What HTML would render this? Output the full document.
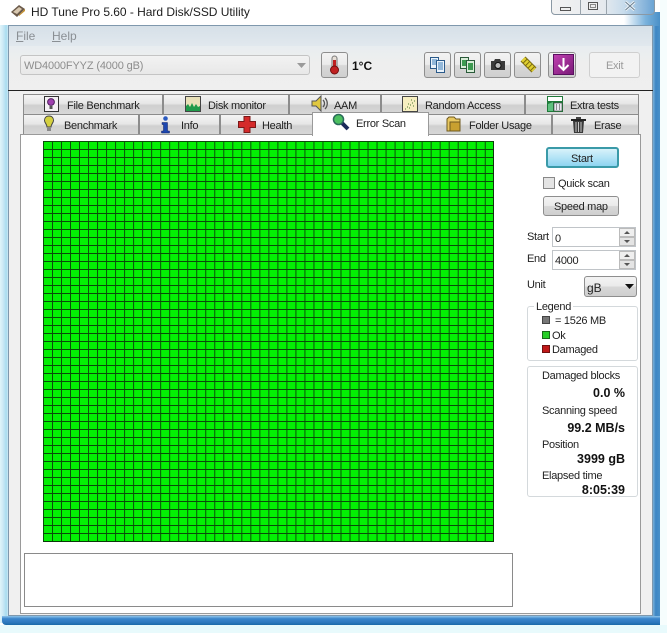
<!DOCTYPE html>
<html><head><meta charset="utf-8"><style>
html,body{margin:0;padding:0}
body{width:667px;height:633px;position:relative;overflow:hidden;background:#eefcfd;font-family:"Liberation Sans",sans-serif;font-size:11px;color:#222}
.a{position:absolute;box-sizing:border-box}
.t{position:absolute;white-space:nowrap;line-height:14px;margin-top:1px;letter-spacing:-.28px}
.v{font-weight:bold;font-size:12.5px;color:#111;letter-spacing:0}
.tab{position:absolute;box-sizing:border-box;background:linear-gradient(#f4f4f4,#e6e6e6 45%,#cfcfcf 55%,#d8d8d8);border:1px solid #8c8c8c;border-bottom:none}
.btn{position:absolute;box-sizing:border-box;border:1px solid #8e8e8e;border-radius:3px;background:linear-gradient(#f3f3f3,#ebebeb 48%,#d8d8d8 52%,#cfcfcf)}
.box{position:absolute;box-sizing:border-box;border:1px solid #d4d9dc;border-radius:3px}
svg{position:absolute;overflow:visible}
</style></head><body>
<!-- outer frame -->
<div class="a" style="left:0;top:0;width:667px;height:633px;background:#fff"></div>
<div class="a" style="left:0;top:25px;width:9px;height:598px;background:linear-gradient(90deg,#dff5fa,#cfeaf6 30%,#a8dcf0 70%,#e2eef4)"></div>
<div class="a" style="left:653px;top:18px;width:7px;height:606px;background:linear-gradient(90deg,#7ab0d8,#3d86c4 40%,#4a90c8)"></div>
<div class="a" style="left:660px;top:0;width:7px;height:633px;background:#f6fdfd"></div>
<div class="a" style="left:624px;top:12px;width:36px;height:14px;background:linear-gradient(90deg,#fff,#7ab2dc 60%,#4a90c8)"></div>
<div class="a" style="left:2px;top:616px;width:658px;height:9px;background:linear-gradient(#8fc4ea,#3c86cc 30%,#2e78be 70%,#1a6aa8);border-radius:0 0 0 4px"></div>
<div class="a" style="left:0;top:625px;width:667px;height:8px;background:#e8fafc"></div>
<!-- client -->
<div class="a" style="left:8px;top:25px;width:645px;height:591px;border:1px solid #7f98ad;background:#f0f0f0"></div>
<div class="a" style="left:9px;top:26px;width:643px;height:20px;background:linear-gradient(#d6e0e8,#e1e8ee)"></div>
<div class="a" style="left:9px;top:46px;width:643px;height:44px;background:linear-gradient(#e8edf0,#eeeeee 40%,#efefef)"></div>
<div class="a" style="left:8px;top:90px;width:645px;height:1px;background:#222"></div>
<!-- title -->
<svg style="left:10px;top:3px" width="16" height="16" viewBox="0 0 16 16"><path d="M1 9 L9 2 L15 6 L7 14 Z" fill="#6b5a4a"/><path d="M3 9 L9 4 L12 6 L7 11 Z" fill="#d8c8b0"/><path d="M9 12 L15 6 V8 L9 13Z" fill="#c8902a"/></svg>
<span class="t" style="left:31px;top:4px;font-size:12px;letter-spacing:-.03px;color:#1c1c1c">HD Tune Pro 5.60 - Hard Disk/SSD Utility</span>
<!-- caption buttons -->
<div class="a" style="left:551px;top:-3px;width:104px;height:18px;border:1px solid #8a98a4;border-radius:4px;background:linear-gradient(90deg,#f2f2f2,#e6eaee 50%,#c8dcec 70%,#6ca4d4)"></div>
<div class="a" style="left:580px;top:0;width:1px;height:15px;background:#9aa4ac"></div>
<div class="a" style="left:606px;top:0;width:1px;height:15px;background:#9aa4ac"></div>
<div class="a" style="left:560px;top:7px;width:11px;height:4px;border:1px solid #555;background:#eee"></div>
<div class="a" style="left:588px;top:2px;width:10px;height:8px;border:1px solid #555;background:#eee"></div>
<div class="a" style="left:590px;top:4px;width:6px;height:4px;border:1px solid #888"></div>
<svg style="left:624px;top:1px" width="12" height="10" viewBox="0 0 12 10"><path d="M1.5 1 L10.5 9 M10.5 1 L1.5 9" stroke="#ecf2f6" stroke-width="3"/><path d="M1.5 1 L10.5 9 M10.5 1 L1.5 9" stroke="#6a7f90" stroke-width="1"/></svg>
<!-- menu -->
<span class="t" style="left:16px;top:28px;color:#8a8f94;font-size:12px;letter-spacing:0"><u>F</u>ile</span>
<span class="t" style="left:52px;top:28px;color:#8a8f94;font-size:12px;letter-spacing:0"><u>H</u>elp</span>
<!-- combo -->
<div class="a" style="left:20px;top:55px;width:290px;height:20px;border:1px solid #c4c4c4;border-radius:3px;background:linear-gradient(#f2f2f2,#e8e8e8)"></div>
<span class="t" style="left:24px;top:58px;color:#8d8d8d;font-size:11px;letter-spacing:-.15px">WD4000FYYZ (4000 gB)</span>
<svg style="left:297px;top:63px" width="9" height="5"><path d="M0 0H9L4.5 5Z" fill="#9a9a9a"/></svg>
<!-- temp button -->
<div class="btn" style="left:321px;top:52px;width:27px;height:26px"></div>
<svg style="left:328px;top:55px" width="13" height="20" viewBox="0 0 13 20"><rect x="4" y="1" width="5" height="13" rx="2.5" fill="#e8e0d8" stroke="#777"/><rect x="5" y="5" width="3" height="10" fill="#c02020"/><circle cx="6.5" cy="15" r="4" fill="#c02020" stroke="#701010"/></svg>
<span class="t" style="left:352px;top:58px;font-weight:bold;font-size:12px;letter-spacing:0;color:#111">1°C</span>
<!-- toolbar buttons -->
<div class="btn" style="left:424px;top:52px;width:27px;height:26px"></div>
<div class="btn" style="left:454px;top:52px;width:27px;height:26px"></div>
<div class="btn" style="left:484px;top:52px;width:27px;height:26px"></div>
<div class="btn" style="left:514px;top:52px;width:27px;height:26px"></div>
<div class="btn" style="left:548px;top:52px;width:28px;height:26px"></div>
<svg style="left:430px;top:57px" width="16" height="16" viewBox="0 0 16 16"><rect x="0.5" y="0.5" width="8" height="11" fill="#eaf3fb" stroke="#2a5a8a"/><rect x="6.5" y="3.5" width="8" height="12" fill="#eaf3fb" stroke="#2a5a8a"/><path d="M8 6h5M8 8h5M8 10h5M8 12h5M2 3h5M2 5h4M2 7h4" stroke="#3b7cb8"/></svg>
<svg style="left:460px;top:57px" width="16" height="16" viewBox="0 0 16 16"><rect x="0.5" y="0.5" width="8" height="11" fill="#d8ecd8" stroke="#2a5a3a"/><rect x="6.5" y="3.5" width="8" height="12" fill="#d8ecd8" stroke="#2a5a3a"/><rect x="8" y="6" width="5" height="7" fill="#3c9a50"/><rect x="2" y="3" width="4" height="6" fill="#3c9a50"/></svg>
<svg style="left:490px;top:58px" width="16" height="13" viewBox="0 0 16 13"><path d="M1 3H4L5 1H10L11 3H15V12H1Z" fill="#3a3a3a"/><circle cx="8" cy="7.5" r="3" fill="#bbb" stroke="#111"/></svg>
<svg style="left:520px;top:56px" width="17" height="18" viewBox="0 0 17 18"><path d="M3 3 L14 14" stroke="#7a6a10" stroke-width="7"/><path d="M3 3 L14 14" stroke="#e0d030" stroke-width="5" stroke-dasharray="2.5 1"/></svg>
<div class="a" style="left:553px;top:54px;width:21px;height:21px;background:linear-gradient(135deg,#c040b0,#7a1a78);border:1px solid #5a1060"></div>
<svg style="left:556px;top:57px" width="15" height="15" viewBox="0 0 15 15"><path d="M7.5 1V13M2.5 8L7.5 13L12.5 8" fill="none" stroke="#fff" stroke-width="2"/></svg>
<div class="a" style="left:589px;top:52px;width:51px;height:26px;border:1px solid #cfcfcf;border-radius:3px;background:#f2f2f2"></div>
<span class="t" style="left:606px;top:58px;color:#9a9a9a">Exit</span>
<!-- tabs top -->
<div class="tab" style="left:23px;top:94px;width:140px;height:20px"></div>
<div class="tab" style="left:163px;top:94px;width:126px;height:20px"></div>
<div class="tab" style="left:289px;top:94px;width:92px;height:20px"></div>
<div class="tab" style="left:381px;top:94px;width:144px;height:20px"></div>
<div class="tab" style="left:525px;top:94px;width:114px;height:20px"></div>
<!-- tabs bottom -->
<div class="tab" style="left:23px;top:114px;width:116px;height:21px"></div>
<div class="tab" style="left:139px;top:114px;width:81px;height:21px"></div>
<div class="tab" style="left:220px;top:114px;width:93px;height:21px"></div>
<div class="tab" style="left:428px;top:114px;width:124px;height:21px"></div>
<div class="tab" style="left:552px;top:114px;width:87px;height:21px"></div>
<!-- page -->
<div class="a" style="left:20px;top:134px;width:621px;height:480px;border:1px solid #9a9a9a;background:#fff"></div>
<div class="a" style="left:312px;top:112px;width:117px;height:24px;border:1px solid #9a9a9a;border-bottom:none;background:#fff"></div>
<!-- tab labels -->
<span class="t" style="left:67px;top:98px">File Benchmark</span>
<span class="t" style="left:208px;top:98px">Disk monitor</span>
<span class="t" style="left:334px;top:98px">AAM</span>
<span class="t" style="left:425px;top:98px">Random Access</span>
<span class="t" style="left:570px;top:98px">Extra tests</span>
<span class="t" style="left:64px;top:118px">Benchmark</span>
<span class="t" style="left:181px;top:118px">Info</span>
<span class="t" style="left:262px;top:118px">Health</span>
<span class="t" style="left:356px;top:116px">Error Scan</span>
<span class="t" style="left:469px;top:118px">Folder Usage</span>
<span class="t" style="left:594px;top:118px">Erase</span>
<!-- tab icons -->
<svg style="left:44px;top:96px" width="15" height="16" viewBox="0 0 15 16"><rect x="0.5" y="0.5" width="14" height="15" fill="#f4f0f4" stroke="#333"/><circle cx="7" cy="6" r="3.4" fill="#a040b0" stroke="#502060"/><path d="M5.5 10h3v3h-3z" fill="#555"/></svg>
<svg style="left:185px;top:96px" width="16" height="16" viewBox="0 0 16 16"><rect x="0.5" y="0.5" width="15" height="15" fill="#e8e0b8" stroke="#444"/><path d="M1 15V10L3 8L5 11L7 7L9 11L11 8L13 11L15 10V15Z" fill="#1f9a4a"/></svg>
<svg style="left:311px;top:95px" width="18" height="17" viewBox="0 0 18 17"><path d="M1 6H5L10 1V16L5 11H1Z" fill="#e0c840" stroke="#555"/><path d="M12 5C14 7 14 10 12 12M14 3C17 6 17 11 14 14" fill="none" stroke="#555" stroke-width="1.3"/></svg>
<svg style="left:402px;top:96px" width="16" height="16" viewBox="0 0 16 16"><rect x="0.5" y="0.5" width="15" height="15" fill="#f6eec0" stroke="#444"/><path d="M3 13h1M5 11h1M7 12h1M8 9h1M10 7h1M11 10h1M12 5h1M9 4h1M6 8h1" stroke="#4a7a30"/></svg>
<svg style="left:547px;top:96px" width="16" height="16" viewBox="0 0 16 16"><rect x="0" y="0" width="16" height="16" fill="#1f7a3a"/><rect x="1" y="1" width="14" height="4" fill="#fff"/><path d="M1 15V8L6 6V15Z" fill="#60c080"/><rect x="7" y="7" width="8" height="8" fill="#e8e8f0" stroke="#444" stroke-width=".6"/><path d="M9 9h1M12 9h1M9 11h1M12 11h1M9 13h1M12 13h1" stroke="#333"/></svg>
<svg style="left:43px;top:115px" width="12" height="18" viewBox="0 0 12 18"><path d="M6 1C2.5 1 1.5 3.5 1.5 5.5C1.5 8 4 9 4 12H8C8 9 10.500 8 10.500 5.5C10.500 3.500 9.500 1 6 1Z" fill="#d4d040" stroke="#444"/><rect x="4" y="13" width="4" height="3" fill="#888"/></svg>
<svg style="left:160px;top:116px" width="11" height="18" viewBox="0 0 11 18"><circle cx="5.5" cy="2.500" r="2.300" fill="#2a5ac0"/><path d="M2 6.500H7.500V15H9.500V17H1.500V15H3.500V8.500H2Z" fill="#1d47b0" stroke="#102060" stroke-width=".5"/></svg>
<svg style="left:238px;top:116px" width="18" height="17" viewBox="0 0 18 17"><path d="M6 0.500H12V5.500H17.500V11.500H12V16.500H6V11.500H0.500V5.500H6Z" fill="#d42a2a" stroke="#7a1818"/></svg>
<svg style="left:332px;top:113px" width="18" height="18" viewBox="0 0 18 18"><path d="M9 9L16 16" stroke="#1a2a5a" stroke-width="4"/><circle cx="6.500" cy="6.500" r="5" fill="#4cc060" stroke="#2a6a5a" stroke-width="1.500"/></svg>
<svg style="left:446px;top:116px" width="16" height="16" viewBox="0 0 16 16"><path d="M1 15V3L3 1H8L10 3H14V15Z" fill="#e8c860" stroke="#705a20"/><rect x="4" y="6" width="10" height="9" fill="#c8a030" stroke="#705a20"/></svg>
<svg style="left:571px;top:116px" width="15" height="17" viewBox="0 0 15 17"><path d="M0 3H15V5H0Z" fill="#222"/><path d="M5 1H10V3H5Z" fill="#444"/><path d="M2 5H13L12 17H3Z" fill="#3a3a3a"/><path d="M5 6V16M7.500 6V16M10 6V16" stroke="#c8c8c8" stroke-width="1"/></svg>
<!-- grid -->
<div class="a" style="left:43px;top:141px;width:451px;height:401px;background-color:#04f004;background-image:linear-gradient(90deg,#0a4a0a 1px,transparent 1px),linear-gradient(#0a4a0a 1px,transparent 1px);background-size:9.02px 8px;border-right:1px solid #0a3a0a;border-bottom:1px solid #0a3a0a"></div>
<!-- log box -->
<div class="a" style="left:24px;top:553px;width:489px;height:54px;border:1px solid #8a8a8a;background:#fff"></div>
<!-- right controls -->
<div class="a" style="left:546px;top:147px;width:73px;height:21px;border:2px solid #3a9aa8;border-radius:3px;background:linear-gradient(#d8f2fa,#b4e4f6 50%,#8ed4f0)"></div>
<span class="t" style="left:571px;top:151px">Start</span>
<div class="a" style="left:543px;top:177px;width:12px;height:12px;border:1px solid #888;background:#e4e4e4"></div>
<span class="t" style="left:558px;top:176px">Quick scan</span>
<div class="btn" style="left:543px;top:196px;width:76px;height:20px"></div>
<span class="t" style="left:554px;top:199px">Speed map</span>
<span class="t" style="left:527px;top:229px">Start</span>
<div class="a" style="left:552px;top:227px;width:84px;height:20px;border:1px solid #c0c4c8;background:#fff"></div>
<span class="t" style="left:555px;top:231px">0</span>
<span class="t" style="left:527px;top:251px">End</span>
<div class="a" style="left:552px;top:250px;width:84px;height:20px;border:1px solid #c0c4c8;background:#fff"></div>
<span class="t" style="left:555px;top:253px">4000</span>
<div class="a" style="left:619px;top:228px;width:16px;height:9px;border:1px solid #bbb;background:#efefef"></div>
<div class="a" style="left:619px;top:237px;width:16px;height:9px;border:1px solid #bbb;background:#e4e4e4"></div>
<div class="a" style="left:619px;top:251px;width:16px;height:9px;border:1px solid #bbb;background:#efefef"></div>
<div class="a" style="left:619px;top:260px;width:16px;height:9px;border:1px solid #bbb;background:#e4e4e4"></div>
<svg style="left:623px;top:230px" width="8" height="37" viewBox="0 0 8 37"><path d="M4 1L7 4H1ZM1 10H7L4 13ZM4 24L7 27H1ZM1 33H7L4 36Z" fill="#555"/></svg>
<span class="t" style="left:527px;top:277px">Unit</span>
<div class="btn" style="left:584px;top:276px;width:53px;height:21px"></div>
<span class="t" style="left:587px;top:280px;font-size:12px;letter-spacing:0">gB</span>
<svg style="left:625px;top:284px" width="9" height="5"><path d="M0 0H9L4.500 5Z" fill="#111"/></svg>
<!-- legend -->
<div class="box" style="left:527px;top:306px;width:111px;height:55px"></div>
<span class="t" style="left:534px;top:299px;background:#fff;padding:0 2px">Legend</span>
<div class="a" style="left:542px;top:316px;width:8px;height:8px;background:#777;border:1px solid #444"></div>
<span class="t" style="left:555px;top:313px">= 1526 MB</span>
<div class="a" style="left:542px;top:331px;width:8px;height:8px;background:#28d028;border:1px solid #1a6a1a"></div>
<span class="t" style="left:552px;top:328px">Ok</span>
<div class="a" style="left:542px;top:345px;width:8px;height:8px;background:#c01818;border:1px solid #701010"></div>
<span class="t" style="left:552px;top:342px">Damaged</span>
<!-- stats -->
<div class="box" style="left:527px;top:366px;width:111px;height:131px"></div>
<span class="t" style="left:542px;top:368px">Damaged blocks</span>
<span class="t v" style="right:42px;top:385px">0.0 %</span>
<span class="t" style="left:542px;top:403px">Scanning speed</span>
<span class="t v" style="right:42px;top:420px">99.2 MB/s</span>
<span class="t" style="left:542px;top:437px">Position</span>
<span class="t v" style="right:42px;top:451px">3999 gB</span>
<span class="t" style="left:542px;top:468px">Elapsed time</span>
<span class="t v" style="right:42px;top:482px">8:05:39</span>
</body></html>
